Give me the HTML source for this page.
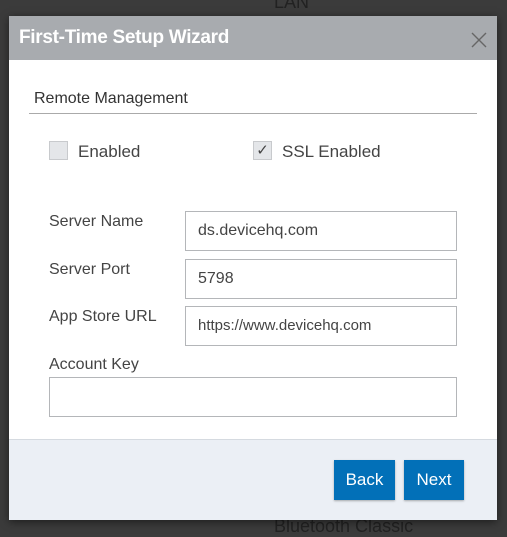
<!DOCTYPE html>
<html><head><meta charset="utf-8"><style>
*{box-sizing:border-box;margin:0;padding:0}
body{width:507px;height:533px;overflow:hidden;background:#3b3b3b;font-family:"Liberation Sans",sans-serif;position:relative}
.bgt{position:absolute;color:#222;font-size:18px}
.dlg{position:absolute;left:9px;top:16px;width:488px;height:504px;background:#fff;box-shadow:0 2px 8px rgba(0,0,0,.5)}
.hdr{height:44px;background:#a8abaf;color:#fff;font-size:19px;font-weight:bold;padding:11px 0 0 10px;letter-spacing:-0.3px}
.x{position:absolute;right:10px;top:16px;width:16px;height:16px}
.sec{position:absolute;left:25px;top:74px;font-size:16px;color:#333}
.line{position:absolute;left:20px;top:97px;width:448px;height:1px;background:#aaa}
.cb{position:absolute;width:19px;height:19px;background:#e4e6e9;border:1px solid #c8cacd;top:125px;font-size:15px;color:#444;text-align:center;line-height:18px}
.cl{position:absolute;top:126px;font-size:17px;color:#444}
.lb{position:absolute;left:40px;font-size:16px;color:#444}
.in{position:absolute;border:1px solid #b4b6b9;background:#fff;font-size:16px;color:#444;padding-left:12px}
.ftr{position:absolute;left:0;top:423px;width:488px;height:81px;background:#ebeff5;border-top:1px solid #d5dae0}
.btn{position:absolute;top:20px;height:40px;background:#0270b8;color:#fff;font-size:17px;text-align:center;line-height:40px;box-shadow:0 1px 2px rgba(0,0,0,.3)}
</style></head><body>
<div class="bgt" style="left:274px;top:-8px">LAN</div>
<div class="bgt" style="left:274px;top:516px">Bluetooth Classic</div>
<div class="dlg">
<div class="hdr">First-Time Setup Wizard</div>
<svg class="x" viewBox="0 0 16 16"><path d="M1 1L15 15M15 1L1 15" stroke="#666" stroke-width="1.4"/></svg>
<div class="sec">Remote Management</div>
<div class="line"></div>
<div class="cb" style="left:40px"></div><div class="cl" style="left:69px">Enabled</div>
<div class="cb" style="left:244px">✓</div><div class="cl" style="left:273px">SSL Enabled</div>
<div class="lb" style="top:197px">Server Name</div>
<div class="in" style="left:176px;top:195px;width:272px;height:40px;line-height:38px">ds.devicehq.com</div>
<div class="lb" style="top:245px">Server Port</div>
<div class="in" style="left:176px;top:243px;width:272px;height:40px;line-height:38px">5798</div>
<div class="lb" style="top:292px">App Store URL</div>
<div class="in" style="left:176px;top:290px;width:272px;height:40px;line-height:38px;font-size:15px">https://www.devicehq.com</div>
<div class="lb" style="top:340px">Account Key</div>
<div class="in" style="left:40px;top:361px;width:408px;height:40px"></div>
<div class="ftr">
<div class="btn" style="left:325px;width:61px">Back</div>
<div class="btn" style="left:395px;width:60px">Next</div>
</div>
</div>
</body></html>
